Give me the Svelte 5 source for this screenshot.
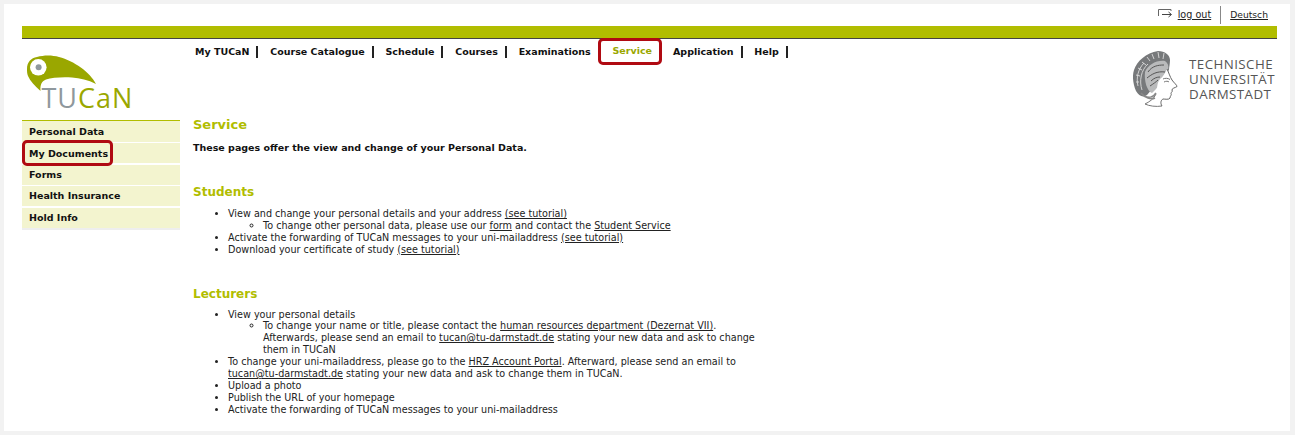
<script>
    const nav = ['My TUCaN', 'Course Catalogue', 'Schedule', 'Courses', 'Examinations', 'Service', 'Application', 'Help']
    const side = ['Personal Data', 'My Documents', 'Forms', 'Health Insurance', 'Hold Info']
</script>

<div class="frame">
    <div class="page">
        <div class="util">
            <svg class="logout-icon" width="15" height="10" viewBox="0 0 15 10">
                <path d="M.5 7V.5H13V2" fill="none" stroke="#666" stroke-width="1" />
                <path d="M4 5.5H13M10.5 3L13.5 5.5L10.5 8" fill="none" stroke="#444" stroke-width="1" />
            </svg>
            <a href="#top" class="logout">log out</a>
            <a href="#top" class="lang">Deutsch</a>
        </div>
        <div class="bar"></div>

        <div class="columns">
            <aside>
                <svg class="logo" width="115" height="66" viewBox="0 0 115 66">
                    <path d="M5 18C5 11 9 7 15 6C22 4 30 4 37 6C52 10 68 21 74 33C66 29 58 27 50 26.5C40 26 30 26.5 24 28.5C20 30 18 33 18.5 40C13 35 8 30 6 25C5 23 5 20 5 18Z" fill="#9aa700" />
                    <circle cx="16.3" cy="16.3" r="8.3" fill="#fff" />
                    <circle cx="16.6" cy="16.3" r="3" fill="#8f989d" />
                    <text x="19.5" y="56.5" class="logo-word"><tspan class="logo-tu">TU</tspan><tspan class="logo-can">CaN</tspan></text>
                </svg>
                <ul class="sidemenu">
                    {#each side as item}
                        <li><span class:marked={item === 'My Documents'}>{item}</span></li>
                    {/each}
                </ul>
            </aside>

            <div class="right">
                <div class="top">
                    <nav>
                        {#each nav as item}
                            <span class="tab" class:plain={item === 'Examinations'} class:active={item === 'Service'}>{item}</span>
                        {/each}
                    </nav>
                    <div class="tud">
                        <svg width="45" height="56" viewBox="0 0 45 56">
                            <path d="M3 40C0 33 -1 25 1 19C4 10 13 2 25 0C32 0 37 4 37 9C37 13 36 16 36 19L33 22L14 44C10 47 6 45 3 40Z" fill="#77797b" />
                            <path d="M12 21C15 14 23 9 32 10C35 12 36 15 35 19C36 22 34 24 31 25C28 31 24 38 19 42C14 40 11 30 12 21Z" fill="#b9babb" />
                            <path d="M5 35C3 27 5 18 11 12M9 39C6 30 8 19 15 13M14 6L17 10M19 3L21 8M25 1L26 7M31 2L30 8M9 11L13 14M5 17L9 19M3 24L7 25M3 31L6 31" fill="none" stroke="#dcdcdc" stroke-width=".9" />
                            <path d="M15 21C19 15 25 14 31 14M14 27C19 23 24 20 32 21M18 30C21 27 24 26 27 26M17 35C20 33 23 31 25 29" fill="none" stroke="#555" stroke-width="1" />
                            <path d="M34 18C36 22 37 26 39 29C41 32 44 34 44 35.500C42 37 39 37 39 39C40 41 38 41 38 42.500C39 44 37 45 37 47C36 49 32 48 30 48C28 49 27 52 29 55C23 56 16 55 12 53C17 50 21 48 23 43C25 38 23 33 27 28C30 26 32 22 34 18Z" fill="#fff" />
                            <path d="M34 18C36 22 37 26 39 29C41 32 44 34 44 35.500C42 37 39 37 39 39C40 41 38 41 38 42.500C39 44 37 45 37 47C36 49 32 48 30 48C28 49 27 52 29 55" fill="none" stroke="#666" stroke-width="1" />
                            <path d="M30 28C32 27 35 27 37 28.500M31 31C33 30 35 30 36 31M23 43C21 48 16 51 12 53C16 55 23 56 29 55" fill="none" stroke="#777" stroke-width="1" />
                            <path d="M12 45C15 47 20 47 23 42M8 42C12 47 18 49 22 47" fill="none" stroke="#888" stroke-width="1.500" />
                        </svg>
                        <div class="tud-name">TECHNISCHE<br />UNIVERSITÄT<br />DARMSTADT</div>
                    </div>
                </div>

                <main>
                    <h1>Service</h1>
                    <p class="intro">These pages offer the view and change of your Personal Data.</p>

                    <h2>Students</h2>
                    <ul>
                        <li>View and change your personal details and your address <a href="#top">(see tutorial)</a>
                            <ul>
                                <li>To change other personal data, please use our <a href="#top">form</a> and contact the <a href="#top">Student Service</a></li>
                            </ul>
                        </li>
                        <li>Activate the forwarding of TUCaN messages to your uni-mailaddress <a href="#top">(see tutorial)</a></li>
                        <li>Download your certificate of study <a href="#top">(see tutorial)</a></li>
                    </ul>

                    <h2>Lecturers</h2>
                    <ul class="lecturers">
                        <li>View your personal details
                            <ul>
                                <li>To change your name or title, please contact the <a href="#top">human resources department (Dezernat VII)</a>. Afterwards, please send an email to <a href="#top">tucan@tu-darmstadt.de</a> stating your new data and ask to change them in TUCaN</li>
                            </ul>
                        </li>
                        <li>To change your uni-mailaddress, please go to the <a href="#top">HRZ Account Portal</a>. Afterward, please send an email to <a href="#top">tucan@tu-darmstadt.de</a> stating your new data and ask to change them in TUCaN.</li>
                        <li>Upload a photo</li>
                        <li>Publish the URL of your homepage</li>
                        <li>Activate the forwarding of TUCaN messages to your uni-mailaddress</li>
                    </ul>
                </main>
            </div>
        </div>
    </div>
</div>

<style>
    :global(body) {
        background: #f2f2f2;
    }

    .frame {
        box-sizing: border-box;
        height: 435px;
        padding: 4px;
        overflow: hidden;
        font-family: "DejaVu Sans", Verdana, sans-serif;
        font-size: 9.65px;
        line-height: 11.9px;
        color: #222;
    }

    .page {
        box-sizing: border-box;
        width: 1286px;
        height: 427px;
        background: #fff;
        padding: 0 13px 0 18px;
    }

    a {
        color: #222;
        text-decoration: underline;
    }

    .util {
        display: flex;
        justify-content: flex-end;
        align-items: center;
        height: 22px;
        padding-right: 9px;
    }

    .logout-icon {
        margin-right: 5px;
        margin-bottom: 2px;
    }

    .lang {
        border-left: 1.5px solid #888;
        margin-left: 9px;
        padding: 3px 0 3px 9px;
        font-size: 9.2px;
    }

    .bar {
        height: 12px;
        background: #b1bd00;
        border-bottom: 1px solid #444;
    }

    .columns {
        display: flex;
    }

    aside {
        width: 158px;
        flex: none;
    }

    .logo {
        display: block;
        margin-top: 12px;
    }

    .logo-word {
        font-family: "Open Sans", sans-serif;
        font-size: 27px;
        letter-spacing: 1px;
    }

    .logo-tu {
        fill: #8f989d;
    }

    .logo-can {
        fill: #9aa700;
    }

    .sidemenu {
        list-style: none;
        margin: 2.5px 0 0;
        padding: 1px 0 0;
        border-top: 1px solid #b1bd00;
        border-bottom: 2px solid #eee;
        font-size: 9.5px;
    }

    .sidemenu li {
        display: flex;
        align-items: center;
        height: 20px;
        margin-bottom: 1.5px;
        background: #f3f4cf;
        font-weight: bold;
        color: #111;
        padding-left: 7px;
    }

    .sidemenu li:first-child {
        margin-top: -1px;
        height: 21px;
        padding-top: 1px;
        box-sizing: border-box;
    }

    .sidemenu li:last-child {
        margin-bottom: 0;
    }

    .marked {
        display: block;
        white-space: nowrap;
        margin-left: -7px;
        padding: 5px 2px 4px 4px;
        border: 3px solid #b00a12;
        border-radius: 5px;
        background: #f3f4cf;
    }

    .right {
        flex: 1;
        min-width: 0;
    }

    .top {
        display: flex;
        justify-content: space-between;
    }

    nav {
        display: flex;
        height: 40px;
        padding: 7px 0 0 15px;
        align-items: flex-start;
        font-size: 9.5px;
    }

    .tab {
        font-weight: bold;
        color: #111;
        padding-right: 7px;
        margin-right: 11.75px;
        border-right: 2px solid #222;
    }

    .tab.plain {
        border-right-color: transparent;
    }

    .tab.active {
        color: #9aa700;
        border: 3px solid #b00a12;
        border-radius: 5px;
        padding: 4px 7px 5px 11px;
        margin: -8px 11px 0 -13px;
        background: #fff;
    }

    .tud {
        display: flex;
        gap: 11px;
        margin: 12px 2px 0 0;
    }

    .tud-name {
        font-family: "Open Sans", sans-serif;
        font-size: 13.3px;
        line-height: 15px;
        color: #555;
        letter-spacing: 0.45px;
        padding-top: 6px;
    }

    main {
        margin-top: 10px;
        padding-left: 13px;
        width: 577px;
    }

    h1 {
        margin: 0;
        font-size: 13px;
        line-height: 16px;
        color: #b1bd00;
    }

    .intro {
        margin: 9px 0 0;
        font-weight: bold;
        color: #111;
        font-size: 9.5px;
    }

    h2 {
        margin: 31px 0 0;
        font-size: 12px;
        line-height: 14px;
        color: #b1bd00;
    }

    main ul {
        margin: 9px 0 0;
        padding-left: 35px;
    }

    main ul.lecturers {
        margin-top: 8px;
    }

    main ul ul {
        margin: 0;
    }
</style>
